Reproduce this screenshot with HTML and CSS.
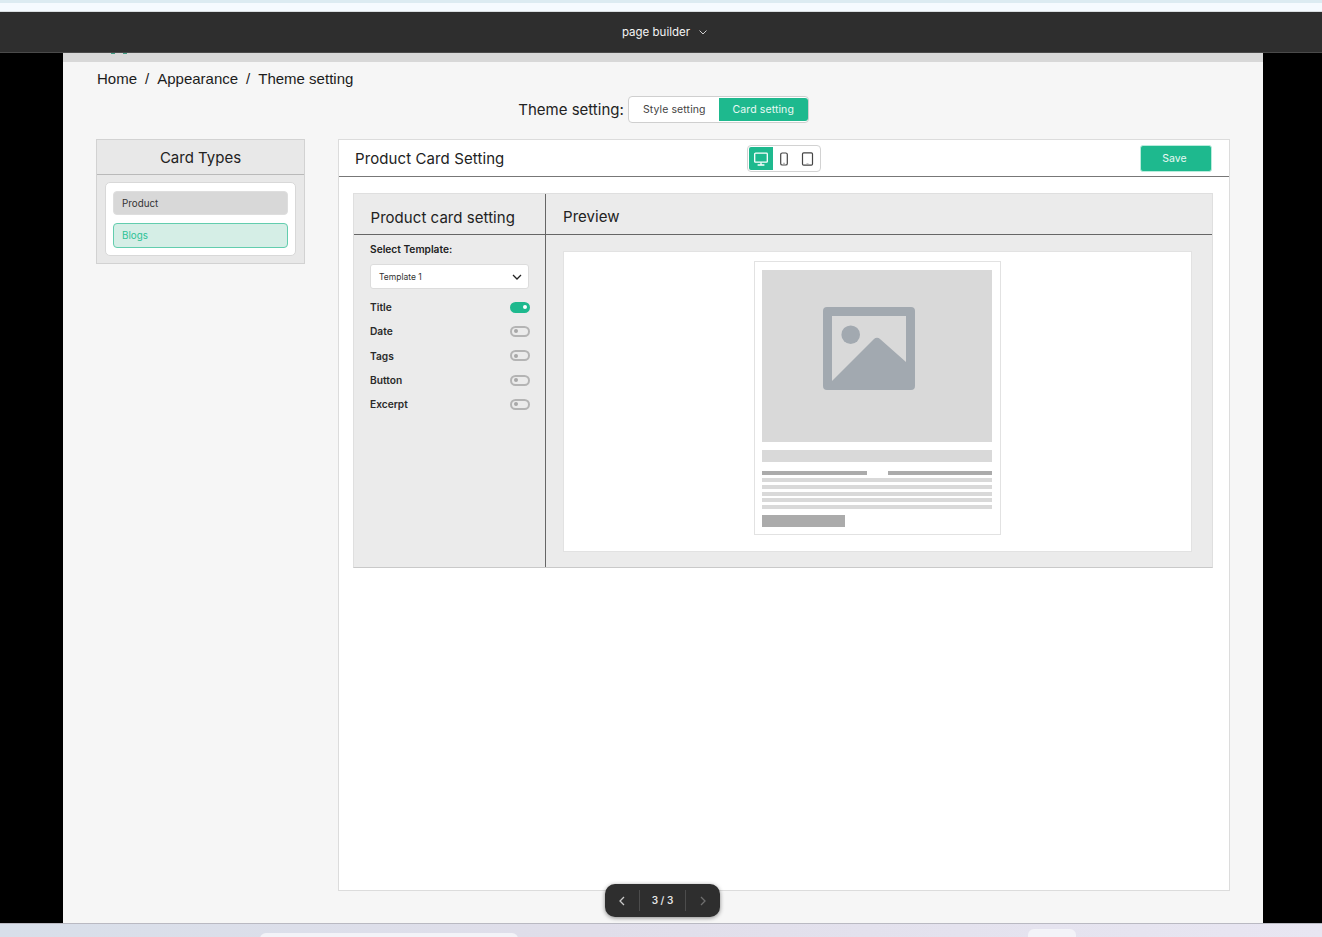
FILE: index.html
```html
<!DOCTYPE html>
<html lang="en">
<head>
<meta charset="utf-8">
<title>Theme setting</title>
<link rel="stylesheet" href="styles.css">
</head>
<body>
<div class="browser-strip"></div>
<header class="topbar">
  <span class="topbar-title">page builder</span>
  <svg class="topbar-chevron" width="10" height="10" viewBox="0 0 10 10"><path d="M1.500 3.500 5 7l3.500-3.500" fill="none" stroke="#cfcfcf" stroke-width="1"/></svg>
</header>
<div class="stage">
  <main class="sheet">
    <div class="sheet-edge"><i></i><i></i></div>
    <div class="sheet-body">
      <nav class="crumbs"><span>Home</span><span>/</span><span>Appearance</span><span>/</span><span>Theme setting</span></nav>
      <div class="mode-row">
        <span class="mode-label">Theme setting:</span>
        <div class="mode-toggle">
          <span class="mode-opt">Style setting</span>
          <span class="mode-opt is-active">Card setting</span>
        </div>
      </div>
      <div class="columns">
        <aside class="types">
          <h2 class="types-head">Card Types</h2>
          <div class="types-wrap">
            <div class="types-list">
              <div class="type-item">Product</div>
              <div class="type-item is-active">Blogs</div>
            </div>
          </div>
        </aside>
        <section class="panel">
          <div class="panel-head">
            <h1 class="panel-title">Product Card Setting</h1>
            <div class="devices">
              <span class="device is-active">
                <svg width="16" height="16" viewBox="0 0 16 16"><rect x="1.700" y="2.200" width="12.600" height="9" rx=".8" fill="none" stroke="#fff" stroke-width="1.300"/><path d="M8 11.500v2.200M4.600 14h6.800" stroke="#fff" stroke-width="1.300" fill="none"/></svg>
              </span>
              <span class="device">
                <svg width="16" height="16" viewBox="0 0 16 16"><rect x="4.700" y="2" width="6.600" height="12" rx="1.600" fill="none" stroke="#444" stroke-width="1.200"/><path d="M7 12.300h2" stroke="#999" stroke-width=".8"/></svg>
              </span>
              <span class="device">
                <svg width="16" height="16" viewBox="0 0 16 16"><rect x="2.500" y="1.800" width="10" height="12.400" rx="1.200" fill="none" stroke="#444" stroke-width="1.200"/><path d="M6.500 12.800h2" stroke="#999" stroke-width=".8"/></svg>
              </span>
            </div>
            <button class="save" type="button">Save</button>
          </div>
          <div class="panel-body">
            <div class="editor">
              <div class="settings">
                <h3 class="settings-head">Product card setting</h3>
                <div class="settings-body">
                  <div class="field-label">Select Template:</div>
                  <div class="select">
                    <span>Template 1</span>
                    <svg width="10" height="10" viewBox="0 0 10 10"><path d="M1 3 5 7l4-4" fill="none" stroke="#222" stroke-width="1.300"/></svg>
                  </div>
                  <ul class="switches">
                    <li class="switch-row"><span>Title</span><i class="switch is-on"></i></li>
                    <li class="switch-row"><span>Date</span><i class="switch"></i></li>
                    <li class="switch-row"><span>Tags</span><i class="switch"></i></li>
                    <li class="switch-row"><span>Button</span><i class="switch"></i></li>
                    <li class="switch-row"><span>Excerpt</span><i class="switch"></i></li>
                  </ul>
                </div>
              </div>
              <div class="preview">
                <h3 class="preview-head">Preview</h3>
                <div class="preview-body">
                  <div class="canvas">
                    <article class="card">
                      <div class="card-img">
                        <svg width="92" height="83" viewBox="0 0 92 83"><path fill="#a2a9b0" fill-rule="evenodd" d="M4 0h84a4 4 0 0 1 4 4v75a4 4 0 0 1-4 4H4a4 4 0 0 1-4-4V4a4 4 0 0 1 4-4ZM9 9v65l42-42a4 4 0 0 1 6 0l26 23V9Z"/><circle cx="27.700" cy="27.700" r="9.300" fill="#a2a9b0"/></svg>
                      </div>
                      <div class="card-title"></div>
                      <div class="card-meta"><span></span><span></span></div>
                      <div class="card-lines"><span></span><span></span><span></span><span></span><span></span></div>
                      <div class="card-btn"></div>
                    </article>
                  </div>
                </div>
              </div>
            </div>
          </div>
        </section>
      </div>
    </div>
  </main>
</div>
<footer class="desk">
  <span class="desk-tab desk-tab-a"></span>
  <span class="desk-tab desk-tab-b"></span>
</footer>
<div class="pager">
  <span class="pager-btn"><svg width="10" height="12" viewBox="0 0 10 12"><path d="M7 2 3 6l4 4" fill="none" stroke="#c9c9c9" stroke-width="1.300"/></svg></span>
  <span class="pager-count">3 / 3</span>
  <span class="pager-btn"><svg width="10" height="12" viewBox="0 0 10 12"><path d="M3 2l4 4-4 4" fill="none" stroke="#6f6f6f" stroke-width="1.300"/></svg></span>
</div>
</body>
</html>
```

FILE: styles.css
```css
* { box-sizing: border-box; }
html, body { margin: 0; padding: 0; }
body {
  width: 1322px;
  height: 937px;
  overflow: hidden;
  display: flex;
  flex-direction: column;
  position: relative;
  font-family: Inter, "Liberation Sans", sans-serif;
  color: #222;
  background: #000;
}
h1, h2, h3 { margin: 0; font-weight: 400; }
ul { margin: 0; padding: 0; list-style: none; }

.browser-strip {
  height: 12px;
  background: linear-gradient(#dcebf2 0 3px, #f5faff 3px 11px, #d9dde0 11px);
}
.topbar {
  height: 41px;
  background: #2e2e2e;
  border-bottom: 1px solid #4a4a4a;
  display: flex;
  align-items: center;
  justify-content: center;
  gap: 8px;
  padding: 0 0 0 8px;
}
.topbar-title { font-size: 11.500px; color: #f4f4f4; }

.stage { height: 870px; background: #000; padding: 0 59px 0 63px; }
.sheet { height: 100%; background: #f6f6f6; }
.sheet-edge { display: flex; gap: 8px; height: 9px; padding-left: 48px; background: #d8d8d8; }
.sheet-edge i { width: 4px; height: 1px; background: #3f9d83; }
.sheet-body { padding: 8px 33px 0 33px; }

.crumbs {
  display: flex;
  gap: 8px;
  height: 18px;
  margin-left: 1px;
  font: 15px/18px "Liberation Sans", Arial, sans-serif;
  color: #1c1c1c;
}
.mode-row {
  display: flex;
  justify-content: center;
  align-items: center;
  gap: 4px;
  margin-top: 8px;
  padding-left: 1px;
  height: 27px;
}
.mode-label { font-size: 15px; color: #222; }
.mode-toggle {
  display: flex;
  width: 181px;
  height: 27px;
  padding: 1px;
  background: #fff;
  border: 1px solid #cfcfcf;
  border-radius: 4px;
}
.mode-opt {
  flex: 0 0 89px;
  display: flex;
  align-items: center;
  justify-content: center;
  font-size: 10.500px;
  letter-spacing: .1px;
  color: #444;
}
.mode-opt.is-active {
  background: #1eb98e;
  color: #eafaf5;
  border-radius: 0 3px 3px 0;
}

.columns { display: flex; align-items: flex-start; gap: 33px; margin-top: 16px; }

.types {
  width: 209px;
  background: #e8e8e8;
  border: 1px solid #d2d2d2;
}
.types-head {
  height: 35px;
  line-height: 35px;
  text-align: center;
  font-size: 15px;
  border-bottom: 1px solid #b9b9b9;
  color: #222;
}
.types-wrap { padding: 7px 8px; }
.types-list {
  background: #fff;
  border: 1px solid #d8d8d8;
  border-radius: 5px;
  padding: 8px 7px 7px 7px;
  display: flex;
  flex-direction: column;
  gap: 8px;
}
.type-item {
  height: 24px;
  line-height: 23px;
  padding-left: 8px;
  font-size: 9.800px;
  background: #d8d8d8;
  border: 1px solid #dedede;
  border-radius: 4px;
  color: #333;
}
.type-item.is-active {
  height: 25px;
  line-height: 24px;
  background: #d5eee6;
  border-color: #62cdae;
  color: #2cc296;
}

.panel {
  width: 892px;
  height: 752px;
  background: #fff;
  border: 1px solid #dcdcdc;
}
.panel-head {
  height: 37px;
  display: flex;
  align-items: center;
  border-bottom: 1px solid #777;
  padding: 0 17px 0 16px;
}
.panel-title { font-size: 15px; letter-spacing: .1px; color: #222; }
.devices {
  display: flex;
  margin-left: 243px;
  width: 74px;
  height: 27px;
  padding: 1px;
  border: 1px solid #d2d2d2;
  border-radius: 4px;
  background: #fff;
}
.device {
  flex: 1;
  display: flex;
  align-items: center;
  justify-content: center;
  padding-top: 1px;
}
.device.is-active { background: #1eb98e; border-radius: 2px 0 0 2px; }
.save {
  margin-left: auto;
  width: 72px;
  height: 27px;
  padding: 0 3px 0 0;
  border: 1px solid #b9ecdc;
  border-radius: 3px;
  background: #1eb98e;
  color: #eafaf5;
  font: 10.500px Inter, sans-serif;
}
.panel-body { padding: 16px 16px 0 14px; }
.editor {
  display: flex;
  height: 375px;
  background: #ebebeb;
  border: 1px solid #dfdfdf;
  border-bottom-color: #c9c9c9;
}
.settings { width: 192px; border-right: 1px solid #666; }
.settings-head, .preview-head {
  height: 41px;
  line-height: 47px;
  font-size: 15px;
  letter-spacing: .05px;
  border-bottom: 1px solid #666;
  color: #222;
}
.settings-head { padding-left: 16.500px; }
.settings-body { padding: 8px 15px 0 16px; }
.field-label { font-size: 10.200px; font-weight: 600; line-height: 13px; color: #222; }
.select {
  display: flex;
  align-items: center;
  justify-content: space-between;
  height: 25px;
  margin-top: 8px;
  padding: 0 6px 0 8px;
  width: 159px;
  background: #fff;
  border: 1px solid #dcdcdc;
  border-radius: 3px;
  font-size: 8.500px;
  color: #333;
}
.switches { margin-top: 6px; }
.switch-row {
  height: 24.300px;
  display: flex;
  align-items: center;
  justify-content: space-between;
  font-size: 10.200px;
  font-weight: 600;
  color: #2a2a2a;
}
.switch {
  position: relative;
  width: 20px;
  height: 11px;
  border: 2px solid #b4b4b4;
  border-radius: 6px;
}
.switch::after {
  content: "";
  position: absolute;
  left: 2px;
  top: 1.500px;
  width: 4px;
  height: 4px;
  border-radius: 50%;
  background: #a8a8a8;
}
.switch.is-on { background: #1eb98e; border-color: #1eb98e; }
.switch.is-on::after { left: auto; right: 1.500px; background: #fff; }

.preview { flex: 1; }
.preview-head { padding-left: 17px; line-height: 45px; }
.preview-body { padding: 16px 20px 0 17px; }
.canvas {
  height: 301px;
  background: #fff;
  border: 1px solid #e2e2e2;
  display: flex;
  justify-content: center;
  padding: 9px 0 0 0;
}
.card {
  width: 247px;
  height: 274px;
  padding: 8px 8px 0 7px;
  background: #fff;
  border: 1px solid #e2e2e2;
}
.card-img {
  height: 172px;
  background: #d9d9d9;
  display: flex;
  align-items: center;
  justify-content: center;
  padding: 0 16px 16px 0;
}
.card-title { height: 12px; margin-top: 8px; background: #d9d9d9; }
.card-meta { display: flex; justify-content: space-between; margin-top: 9px; }
.card-meta span { width: 104.500px; height: 4px; background: #ababab; }
.card-lines { display: flex; flex-direction: column; gap: 2.750px; margin-top: 3px; }
.card-lines span { height: 4px; background: #d9d9d9; }
.card-btn { width: 83px; height: 12px; margin-top: 6px; background: #ababab; }

.desk {
  position: relative;
  flex: 1;
  border-top: 1px solid #b9b9c2;
  background: linear-gradient(90deg, #d8dfea, #e0deea 45%, #e8e6f2);
  overflow: hidden;
}
.desk-tab { position: absolute; background: #f3f3f8; border-radius: 6px 6px 0 0; }
.desk-tab-a { left: 260px; top: 9px; width: 258px; height: 8px; }
.desk-tab-b { left: 1028px; top: 5px; width: 48px; height: 10px; }

.pager {
  position: absolute;
  left: 605px;
  top: 884px;
  width: 115px;
  height: 33px;
  display: flex;
  align-items: center;
  background: #2e2e2e;
  border-radius: 10px;
  box-shadow: 0 1px 4px rgba(0, 0, 0, .45);
}
.pager-btn { width: 34px; display: flex; justify-content: center; }
.pager-count {
  flex: 1;
  height: 21px;
  line-height: 21px;
  text-align: center;
  font-size: 10px;
  font-weight: 600;
  color: #e4e4e4;
  border: 1px solid #4c4c4c;
  border-width: 0 1px;
}
```
